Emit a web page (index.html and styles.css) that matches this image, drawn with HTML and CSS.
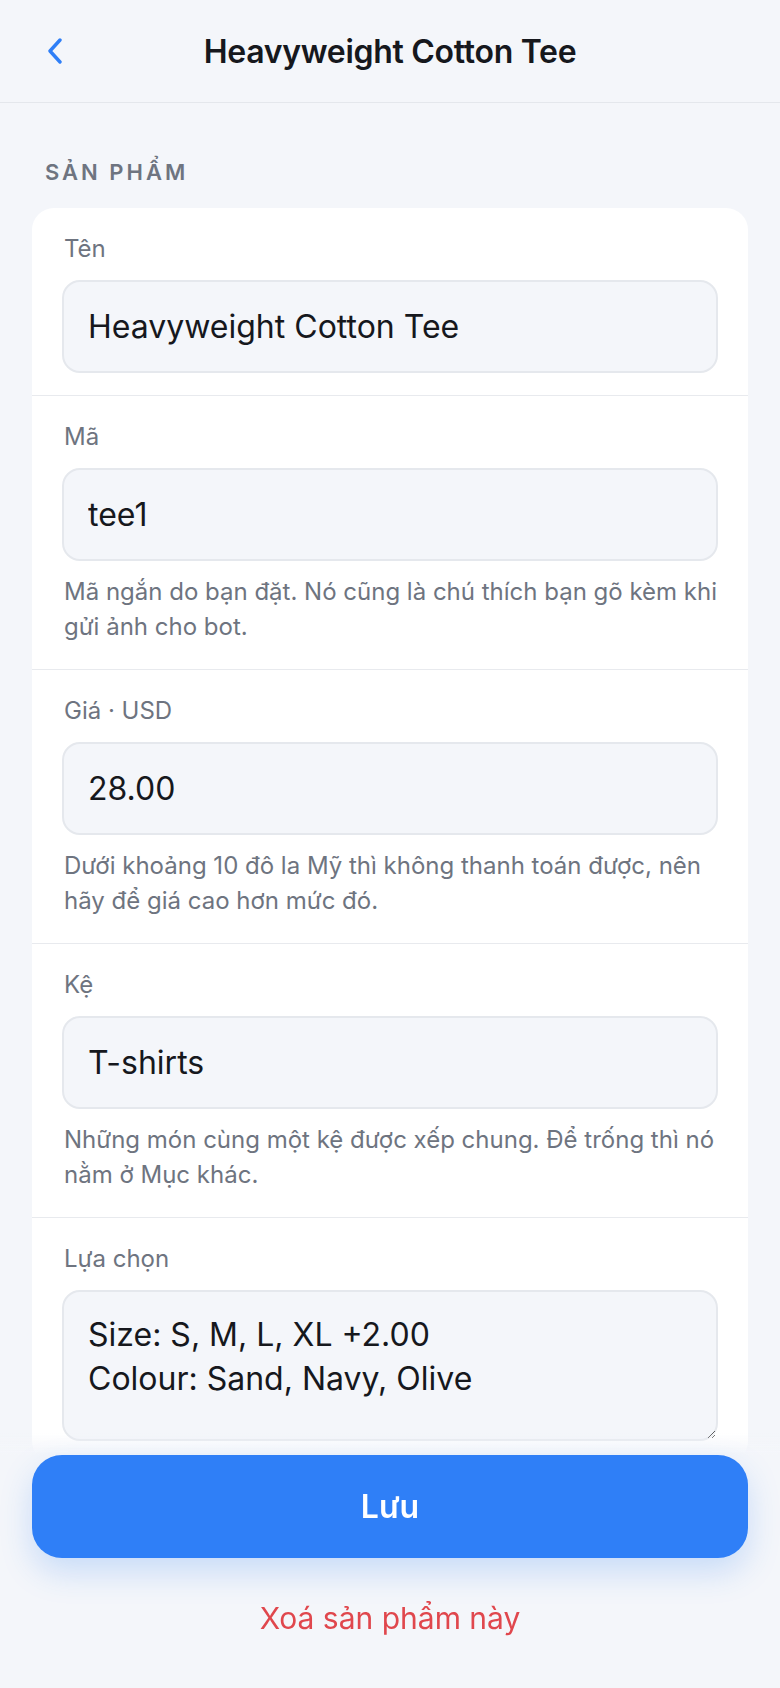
FILE: index.html
```html
<!DOCTYPE html>
<html lang="vi">
<head>
    <meta charset="UTF-8">
    <meta name="viewport" content="width=device-width, initial-scale=1.0">
    <title>Heavyweight Cotton Tee</title>
    <link rel="stylesheet" href="styles.css">
</head>
<body>
    <div class="header">
        <button class="back-button" aria-label="Quay lại">
            <svg width="18" height="26" viewBox="0 0 18 26">
                <path d="M14 2 L4 13 L14 24" fill="none" stroke="#2f7ff7" stroke-width="3.4" stroke-linecap="round" stroke-linejoin="round"/>
            </svg>
        </button>
        <h1>Heavyweight Cotton Tee</h1>
        <span></span>
    </div>

    <div class="content">
        <div class="section-title">Sản phẩm</div>

        <div class="card">
            <div class="field">
                <label class="field-label" for="name">Tên</label>
                <input class="input-field" id="name" type="text" value="Heavyweight Cotton Tee">
            </div>

            <div class="field">
                <label class="field-label" for="code">Mã</label>
                <input class="input-field" id="code" type="text" value="tee1">
                <p class="hint">Mã ngắn do bạn đặt. Nó cũng là chú thích bạn gõ kèm khi gửi ảnh cho bot.</p>
            </div>

            <div class="field">
                <label class="field-label" for="price">Giá · USD</label>
                <input class="input-field" id="price" type="text" value="28.00">
                <p class="hint">Dưới khoảng 10 đô la Mỹ thì không thanh toán được, nên hãy để giá cao hơn mức đó.</p>
            </div>

            <div class="field">
                <label class="field-label" for="shelf">Kệ</label>
                <input class="input-field" id="shelf" type="text" value="T-shirts">
                <p class="hint">Những món cùng một kệ được xếp chung. Để trống thì nó nằm ở Mục khác.</p>
            </div>

            <div class="field">
                <label class="field-label" for="options">Lựa chọn</label>
                <textarea class="input-field textarea" id="options" rows="3">Size: S, M, L, XL +2.00
Colour: Sand, Navy, Olive</textarea>
            </div>
        </div>
    </div>

    <div class="footer">
        <button class="save-button">Lưu</button>
        <button class="delete-button">Xoá sản phẩm này</button>
    </div>
</body>
</html>
```

FILE: styles.css
```css
* {
    margin: 0;
    padding: 0;
    box-sizing: border-box;
}

body {
    font-family: Inter, "Noto Sans", sans-serif;
    background: #f4f6fa;
    color: #16181d;
    min-height: 100vh;
}

.header {
    height: 103px;
    display: grid;
    grid-template-columns: 1fr auto 1fr;
    align-items: center;
    border-bottom: 1px solid #e4e7ec;
}

.back-button {
    justify-self: start;
    margin-left: 46px;
    background: none;
    border: none;
    display: flex;
    cursor: pointer;
}

.header h1 {
    font-size: 32px;
    font-weight: 600;
    letter-spacing: -0.3px;
    color: #16181d;
}

.content {
    padding: 55px 32px 260px;
}

.section-title {
    font-size: 22px;
    font-weight: 600;
    letter-spacing: 3px;
    text-transform: uppercase;
    color: #6e7480;
    line-height: 28px;
    padding-left: 13px;
    margin-bottom: 22px;
}

.card {
    background: white;
    border-radius: 22px;
    overflow: hidden;
}

.field {
    padding: 26px 30px 22px;
    border-bottom: 1px solid #e8eaee;
}

.field:last-child {
    border-bottom: none;
}

.field-label {
    display: block;
    padding-left: 2px;
    font-size: 24px;
    line-height: 30px;
    color: #6e7480;
    margin-bottom: 16px;
}

.input-field {
    display: block;
    width: 100%;
    height: 93px;
    padding: 0 24px;
    background: #f4f6fa;
    border: 2px solid #e5e8ed;
    border-radius: 18px;
    font-family: inherit;
    font-size: 32px;
    color: #16181d;
    outline: none;
}

.textarea {
    height: 151px;
    padding: 21px 24px;
    line-height: 44px;
    resize: vertical;
}

.hint {
    margin: 13px 0 3px;
    padding-left: 2px;
    font-size: 24px;
    line-height: 35px;
    color: #6e7480;
}

.footer {
    position: fixed;
    left: 0;
    right: 0;
    bottom: 0;
    padding: 22px 32px 50px;
    background: linear-gradient(to bottom, rgba(244, 246, 250, 0), #f4f6fa 22px);
    display: flex;
    flex-direction: column;
    align-items: center;
    gap: 40px;
}

.save-button {
    width: 100%;
    height: 103px;
    background: #2f7ff7;
    color: white;
    border: none;
    border-radius: 30px;
    font-family: inherit;
    font-size: 32px;
    font-weight: 600;
    box-shadow: 0 14px 32px rgba(47, 127, 247, 0.22);
    cursor: pointer;
}

.delete-button {
    background: none;
    border: none;
    font-family: inherit;
    font-size: 30px;
    line-height: 40px;
    color: #e0474d;
    cursor: pointer;
}
```
